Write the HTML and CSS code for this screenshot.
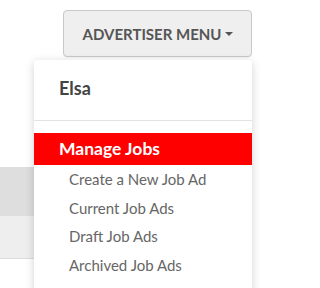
FILE: index.html
```html
<!DOCTYPE html>
<html>
<head>
<meta charset="utf-8">
<link rel="stylesheet" href="styles.css">
</head>
<body>
<div class="page">
  <div class="topbar">
    <button class="menu-btn">ADVERTISER MENU <span class="caret"></span></button>
  </div>
  <div class="table">
    <div class="row row-dark"></div>
    <div class="row row-light"></div>
  </div>
  <div class="dropdown">
    <div class="dd-name">Elsa</div>
    <div class="dd-divider"></div>
    <div class="dd-section">Manage Jobs</div>
    <ul class="dd-list">
      <li>Create a New Job Ad</li>
      <li>Current Job Ads</li>
      <li>Draft Job Ads</li>
      <li>Archived Job Ads</li>
    </ul>
  </div>
</div>
</body>
</html>
```

FILE: styles.css
```css
html, body {
  margin: 0;
  padding: 0;
  background: #fff;
  font-family: Lato, "Open Sans", sans-serif;
}
.page {
  position: relative;
  width: 288px;
  height: 288px;
  overflow: hidden;
}
.topbar {
  display: flex;
  justify-content: flex-end;
  padding: 10px 36px 0 0;
}
.menu-btn {
  box-sizing: border-box;
  width: 189px;
  height: 47px;
  border: 1px solid #c9c9c9;
  border-radius: 4px;
  background: #efefef;
  color: #555;
  font-family: Lato, sans-serif;
  font-size: 15px;
  font-weight: 700;
  padding: 0 0 0 1px;
  display: flex;
  align-items: center;
  justify-content: center;
  gap: 4px;
  box-shadow: 0 1px 1px rgba(0,0,0,0.05);
}
.caret {
  display: inline-block;
  width: 0;
  height: 0;
  border-left: 4px solid transparent;
  border-right: 4px solid transparent;
  border-top: 4px solid #555;
}
.table {
  margin-top: 110px;
  width: 120px;
}
.row-dark {
  height: 49px;
  background: #dedede;
}
.row-light {
  height: 42px;
  background: #eeeeee;
  border-bottom: 1px solid #dcdcdc;
}
.dropdown {
  position: absolute;
  left: 34px;
  top: 60px;
  width: 218px;
  height: 260px;
  background: #fff;
  border-radius: 3px;
  box-shadow: 0 2px 10px rgba(0,0,0,0.18);
}
.dd-name {
  padding: 16px 25px 0;
  font-size: 18px;
  line-height: 24px;
  font-weight: 700;
  color: #444;
}
.dd-divider {
  margin-top: 20px;
  border-top: 1px solid #e3e3e3;
}
.dd-section {
  margin-top: 12px;
  height: 32px;
  line-height: 32px;
  padding-left: 25px;
  background: #ff0000;
  color: #fff;
  font-size: 17.5px;
  font-weight: 700;
}
.dd-list {
  list-style: none;
  margin: 0;
  padding: 0 0 0 35px;
}
.dd-list li {
  font-size: 15px;
  line-height: 28.5px;
  color: #666;
}
```
